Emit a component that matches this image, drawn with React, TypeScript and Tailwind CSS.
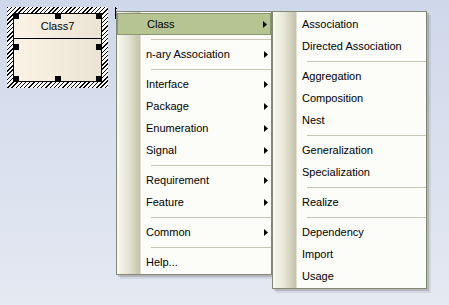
import React from 'react';

type Entry = { label: string; arrow?: boolean; active?: boolean } | 'sep';

const MAIN_MENU: Entry[] = [
  { label: 'Class', arrow: true, active: true },
  'sep',
  { label: 'n-ary Association', arrow: true },
  'sep',
  { label: 'Interface', arrow: true },
  { label: 'Package', arrow: true },
  { label: 'Enumeration', arrow: true },
  { label: 'Signal', arrow: true },
  'sep',
  { label: 'Requirement', arrow: true },
  { label: 'Feature', arrow: true },
  'sep',
  { label: 'Common', arrow: true },
  'sep',
  { label: 'Help...' },
];

const CLASS_MENU: Entry[] = [
  { label: 'Association' },
  { label: 'Directed Association' },
  'sep',
  { label: 'Aggregation' },
  { label: 'Composition' },
  { label: 'Nest' },
  'sep',
  { label: 'Generalization' },
  { label: 'Specialization' },
  'sep',
  { label: 'Realize' },
  'sep',
  { label: 'Dependency' },
  { label: 'Import' },
  { label: 'Usage' },
];

function Arrow() {
  return (
    <svg width="4" height="7" viewBox="0 0 4 7" className="shrink-0">
      <polygon points="0,0 4,3.5 0,7" fill="#000" />
    </svg>
  );
}

function MenuList({ items }: { items: Entry[] }) {
  return (
    <>
      {items.map((item, i) =>
        item === 'sep' ? (
          <div key={i} className="h-2 pl-[34px] pt-1">
            <div className="h-px bg-[#c7c5b4]" />
          </div>
        ) : (
          <div
            key={i}
            className={`flex h-[22px] items-center justify-between pl-[29px] pr-[3px] ${
              item.active ? 'border border-[#8a9772] bg-[#b6c491] pl-[28px] pr-[2px]' : ''
            }`}
          >
            <span>{item.label}</span>
            {item.arrow && <Arrow />}
          </div>
        )
      )}
    </>
  );
}

// diagram node with selection hatch + handles
function ClassNode() {
  const handle = 'absolute h-[6px] w-[6px] bg-black';
  return (
    <div className="absolute left-[7px] top-[7px] bg-[repeating-linear-gradient(135deg,#000_0_1px,#fff_1px_3px)] p-[6px]">
      <div className="relative flex h-[69px] w-[89px] flex-col border border-black bg-gradient-to-r from-[#fbf4e6] to-[#ebe3d3]">
        <div className="flex h-[25px] items-center justify-center border-b border-black text-[11px] text-black">
          Class7
        </div>
        <div className={`${handle} -left-px -top-px`} />
        <div className={`${handle} left-[41px] -top-px`} />
        <div className={`${handle} -right-px -top-px`} />
        <div className={`${handle} -left-px top-[30px]`} />
        <div className={`${handle} -right-px top-[30px]`} />
        <div className={`${handle} -bottom-px -left-px`} />
        <div className={`${handle} -bottom-px left-[41px]`} />
        <div className={`${handle} -bottom-px -right-px`} />
      </div>
    </div>
  );
}

export default function App() {
  const menuBase =
    'absolute top-[11px] flex flex-col border border-[#838775] py-px text-[11px] text-black bg-[linear-gradient(to_right,#fafaf1_0px,#e4e3d3_12px,#c3c2ab_23px,#fcfcf9_24px)] shadow-[2px_2px_0_rgba(70,70,70,0.22),4px_4px_0_rgba(70,70,70,0.1)]';

  return (
    <div className="relative h-[305px] w-[449px] overflow-hidden bg-gradient-to-b from-[#cfd8ea] to-[#e4e9f2] font-['Liberation_Sans',Arial,sans-serif]">
      <ClassNode />

      {/* cursor remnant */}
      <svg className="absolute left-[114px] top-[6px]" width="4" height="14" viewBox="0 0 4 14">
        <line x1="1.5" y1="1" x2="1.5" y2="13" stroke="#000" strokeWidth="1" />
        <line x1="1.5" y1="1.5" x2="3" y2="3" stroke="#000" strokeWidth="1" />
      </svg>

      <div className={`${menuBase} left-[116px] w-[156px]`}>
        <MenuList items={MAIN_MENU} />
      </div>

      <div className={`${menuBase} left-[272px] w-[155px]`}>
        <MenuList items={CLASS_MENU} />
      </div>
    </div>
  );
}
